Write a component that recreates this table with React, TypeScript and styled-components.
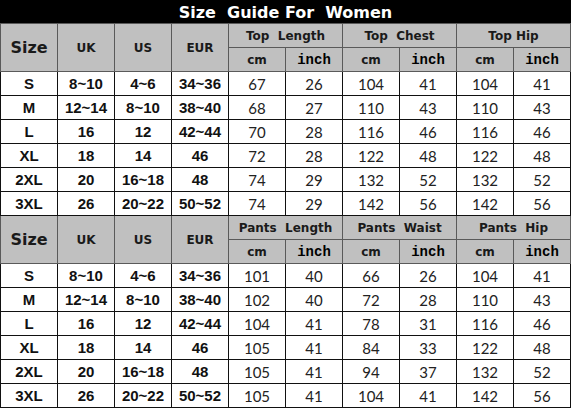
import React from "react";
import styled, { createGlobalStyle } from "styled-components";

const sizes = [
    ["S", "8~10", "4~6", "34~36"],
    ["M", "12~14", "8~10", "38~40"],
    ["L", "16", "12", "42~44"],
    ["XL", "18", "14", "46"],
    ["2XL", "20", "16~18", "48"],
    ["3XL", "26", "20~22", "50~52"],
];

const tops = {
    groups: ["Top  Length", "Top  Chest", "Top Hip"],
    values: [
        [67, 26, 104, 41, 104, 41],
        [68, 27, 110, 43, 110, 43],
        [70, 28, 116, 46, 116, 46],
        [72, 28, 122, 48, 122, 48],
        [74, 29, 132, 52, 132, 52],
        [74, 29, 142, 56, 142, 56],
    ],
};

const pants = {
    groups: ["Pants  Length", "Pants  Waist", "Pants  Hip"],
    values: [
        [101, 40, 66, 26, 104, 41],
        [102, 40, 72, 28, 110, 43],
        [104, 41, 78, 31, 116, 46],
        [105, 41, 84, 33, 122, 48],
        [105, 41, 94, 37, 132, 52],
        [105, 41, 104, 41, 142, 56],
    ],
};

function Section({ groups, values }: { groups: string[]; values: number[][] }) {
    return (
        <tbody>
        <Row>
            <HeadCell rowSpan={2} $big>Size</HeadCell>
            <HeadCell rowSpan={2}>UK</HeadCell>
            <HeadCell rowSpan={2}>US</HeadCell>
            <HeadCell rowSpan={2}>EUR</HeadCell>
            {groups.map((g) => (
                <GroupCell key={g} colSpan={2}>{g}</GroupCell>
            ))}
        </Row>
        <Row>
            {groups.map((g) => (
                <React.Fragment key={g}>
                    <HeadCell>cm</HeadCell>
                    <InchCell>inch</InchCell>
                </React.Fragment>
            ))}
        </Row>
        {sizes.map((s, i) => (
            <Row key={s[0]}>
                {s.map((v, j) => (
                    <SizeCell key={j}>{v}</SizeCell>
                ))}
                {values[i].map((v, j) => (
                    <NumCell key={j}>{v}</NumCell>
                ))}
            </Row>
        ))}
        </tbody>
    );
}

export default function App() {
    return (
        <>
            <GlobalStyle />
            <Wrap>
                <Title>Size  Guide For  Women</Title>
                <Table>
                    <colgroup>
                        {Array.from({ length: 10 }).map((_, i) => (
                            <Col key={i} />
                        ))}
                    </colgroup>
                    <Section groups={tops.groups} values={tops.values} />
                    <Section groups={pants.groups} values={pants.values} />
                </Table>
            </Wrap>
        </>
    );
}

const GlobalStyle = createGlobalStyle`
    body {
        margin: 0;
        background: #fff;
    }
`;

const Wrap = styled.div`
    width: 571px;
    height: 409px;
    overflow: hidden;
    font-family: "DejaVu Sans", "Liberation Sans", sans-serif;
`;

const Title = styled.div`
    height: 24px;
    background: #000;
    color: #fff;
    display: flex;
    align-items: center;
    justify-content: center;
    font-size: 16px;
    font-weight: 700;
    white-space: pre;
`;

const Table = styled.table`
    width: 571px;
    table-layout: fixed;
    border-collapse: collapse;
    margin-top: -1px;
`;

const Col = styled.col`
    width: 57px;
`;

const Row = styled.tr`
    height: 24px;
`;

const Cell = styled.td`
    padding: 0;
    text-align: center;
    border: 1px solid #111;
    line-height: 14px;
    overflow: hidden;
`;

const HeadCell = styled(Cell)<{ $big?: boolean }>`
    background: #c0c0c0;
    color: #1a1a1a;
    font-weight: 700;
    font-size: ${(p) => (p.$big ? "16px" : "12px")};
    border-color: #5a5a5a;
`;

const GroupCell = styled(HeadCell)`
    white-space: pre;
`;

const InchCell = styled(HeadCell)`
    font-family: "Liberation Mono", "Courier New", monospace;
    font-size: 14px;
    color: #000;
`;

const SizeCell = styled(Cell)`
    font-family: "Liberation Sans", Arial, sans-serif;
    font-weight: 700;
    font-size: 15px;
    color: #111;
`;

const NumCell = styled(Cell)`
    font-family: "Lato", "Liberation Sans", sans-serif;
    font-size: 15px;
    color: #222;
`;
